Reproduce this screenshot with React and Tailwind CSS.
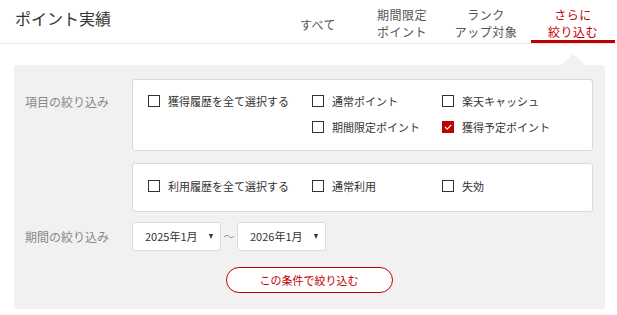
import React from "react";

const FONT = { fontFamily: '"Noto Sans CJK JP", "Noto Sans", sans-serif' };

function Check({ label, checked }) {
  return (
    <div className="flex items-center gap-[8px] h-[18px]">
      {checked ? (
        <span className="w-[12px] h-[12px] bg-[#bf0000] flex items-center justify-center">
          <svg width="12" height="12" viewBox="0 0 12 12">
            <polyline points="3,6 5.2,8.2 9.2,3.8" fill="none" stroke="#fff" strokeWidth="1.1" />
          </svg>
        </span>
      ) : (
        <span className="w-[12px] h-[12px] border border-[#333] bg-white box-border" />
      )}
      <span className="text-[11px] leading-[18px] text-[#333] whitespace-nowrap">{label}</span>
    </div>
  );
}

function Select({ value }) {
  return (
    <div className="w-[89px] h-[29px] bg-white border border-[#dcdcdc] rounded-[3px] flex items-center justify-between pl-[12px] pr-[7px] box-border">
      <span className="text-[11px] text-[#333] leading-none">{value}</span>
      <span className="w-0 h-0 border-l-[2.5px] border-r-[2.5px] border-t-[5px] border-l-transparent border-r-transparent border-t-[#333]" />
    </div>
  );
}

function Tab({ lines, active, first }) {
  const base = "w-[84px] h-[43px] box-border text-center text-[12px] tracking-[0.5px] leading-[17px]";
  const cls = active
    ? `${base} ml-[3px] pt-[6px] text-[#bf0000] border-b-[3px] border-[#bf0000]`
    : first
    ? `${base} pt-[16px] text-[#555]`
    : `${base} pt-[6px] text-[#555]`;
  return (
    <div className={cls}>
      {lines.map((l) => (
        <div key={l} className="h-[17px]">{l}</div>
      ))}
    </div>
  );
}

export default function App() {
  return (
    <div className="w-[617px] h-[315px] bg-white overflow-hidden" style={FONT}>
      {/* header */}
      <div className="flex justify-between h-[44px] border-b border-[#e6e6e6] box-border">
        <div className="pl-[15px] pt-[8px] text-[16px] leading-[20px] text-[#333]">ポイント実績</div>
        <div className="flex pr-[2px] h-[43px]">
          <Tab lines={["すべて"]} first />
          <Tab lines={["期間限定", "ポイント"]} />
          <Tab lines={["ランク", "アップ対象"]} />
          <Tab lines={["さらに", "絞り込む"]} active />
        </div>
      </div>

      {/* panel */}
      <div className="relative ml-[14px] mt-[21px] w-[591px] rounded-[3px] bg-[#f1f1f1] pl-[11px] pr-[12px] pt-[14px] pb-[16px]">
        <span className="absolute left-[547px] top-[-11px] w-0 h-0 border-l-[12px] border-r-[12px] border-b-[11px] border-l-transparent border-r-transparent border-b-[#f1f1f1]" />

        <div className="flex items-start">
          <div className="w-[107px] mt-[14px] text-[12px] leading-[18px] text-[#888]">項目の絞り込み</div>
          <div className="flex-1 bg-white border border-[#d9d9d9] rounded-[3px] pl-[15px] pt-[12px] pb-[14px]">
            <div className="grid grid-cols-[164px_130px_1fr] gap-y-[8px]">
              <Check label="獲得履歴を全て選択する" />
              <Check label="通常ポイント" />
              <Check label="楽天キャッシュ" />
              <div />
              <Check label="期間限定ポイント" />
              <Check label="獲得予定ポイント" checked />
            </div>
          </div>
        </div>

        <div className="ml-[107px] mt-[12px] bg-white border border-[#d9d9d9] rounded-[3px] pl-[15px] pt-[13px] pb-[16px]">
          <div className="grid grid-cols-[164px_130px_1fr]">
            <Check label="利用履歴を全て選択する" />
            <Check label="通常利用" />
            <Check label="失効" />
          </div>
        </div>

        <div className="flex items-center mt-[10px]">
          <div className="w-[107px] text-[12px] leading-[18px] text-[#888]">期間の絞り込み</div>
          <Select value="2025年1月" />
          <span className="w-[16px] text-center text-[11px] text-[#999]">～</span>
          <Select value="2026年1月" />
        </div>

        <div className="flex justify-center mt-[16px]">
          <button className="w-[167px] h-[26px] rounded-full border border-[#bf0000] bg-white text-[11px] text-[#bf0000] leading-none">
            この条件で絞り込む
          </button>
        </div>
      </div>
    </div>
  );
}
